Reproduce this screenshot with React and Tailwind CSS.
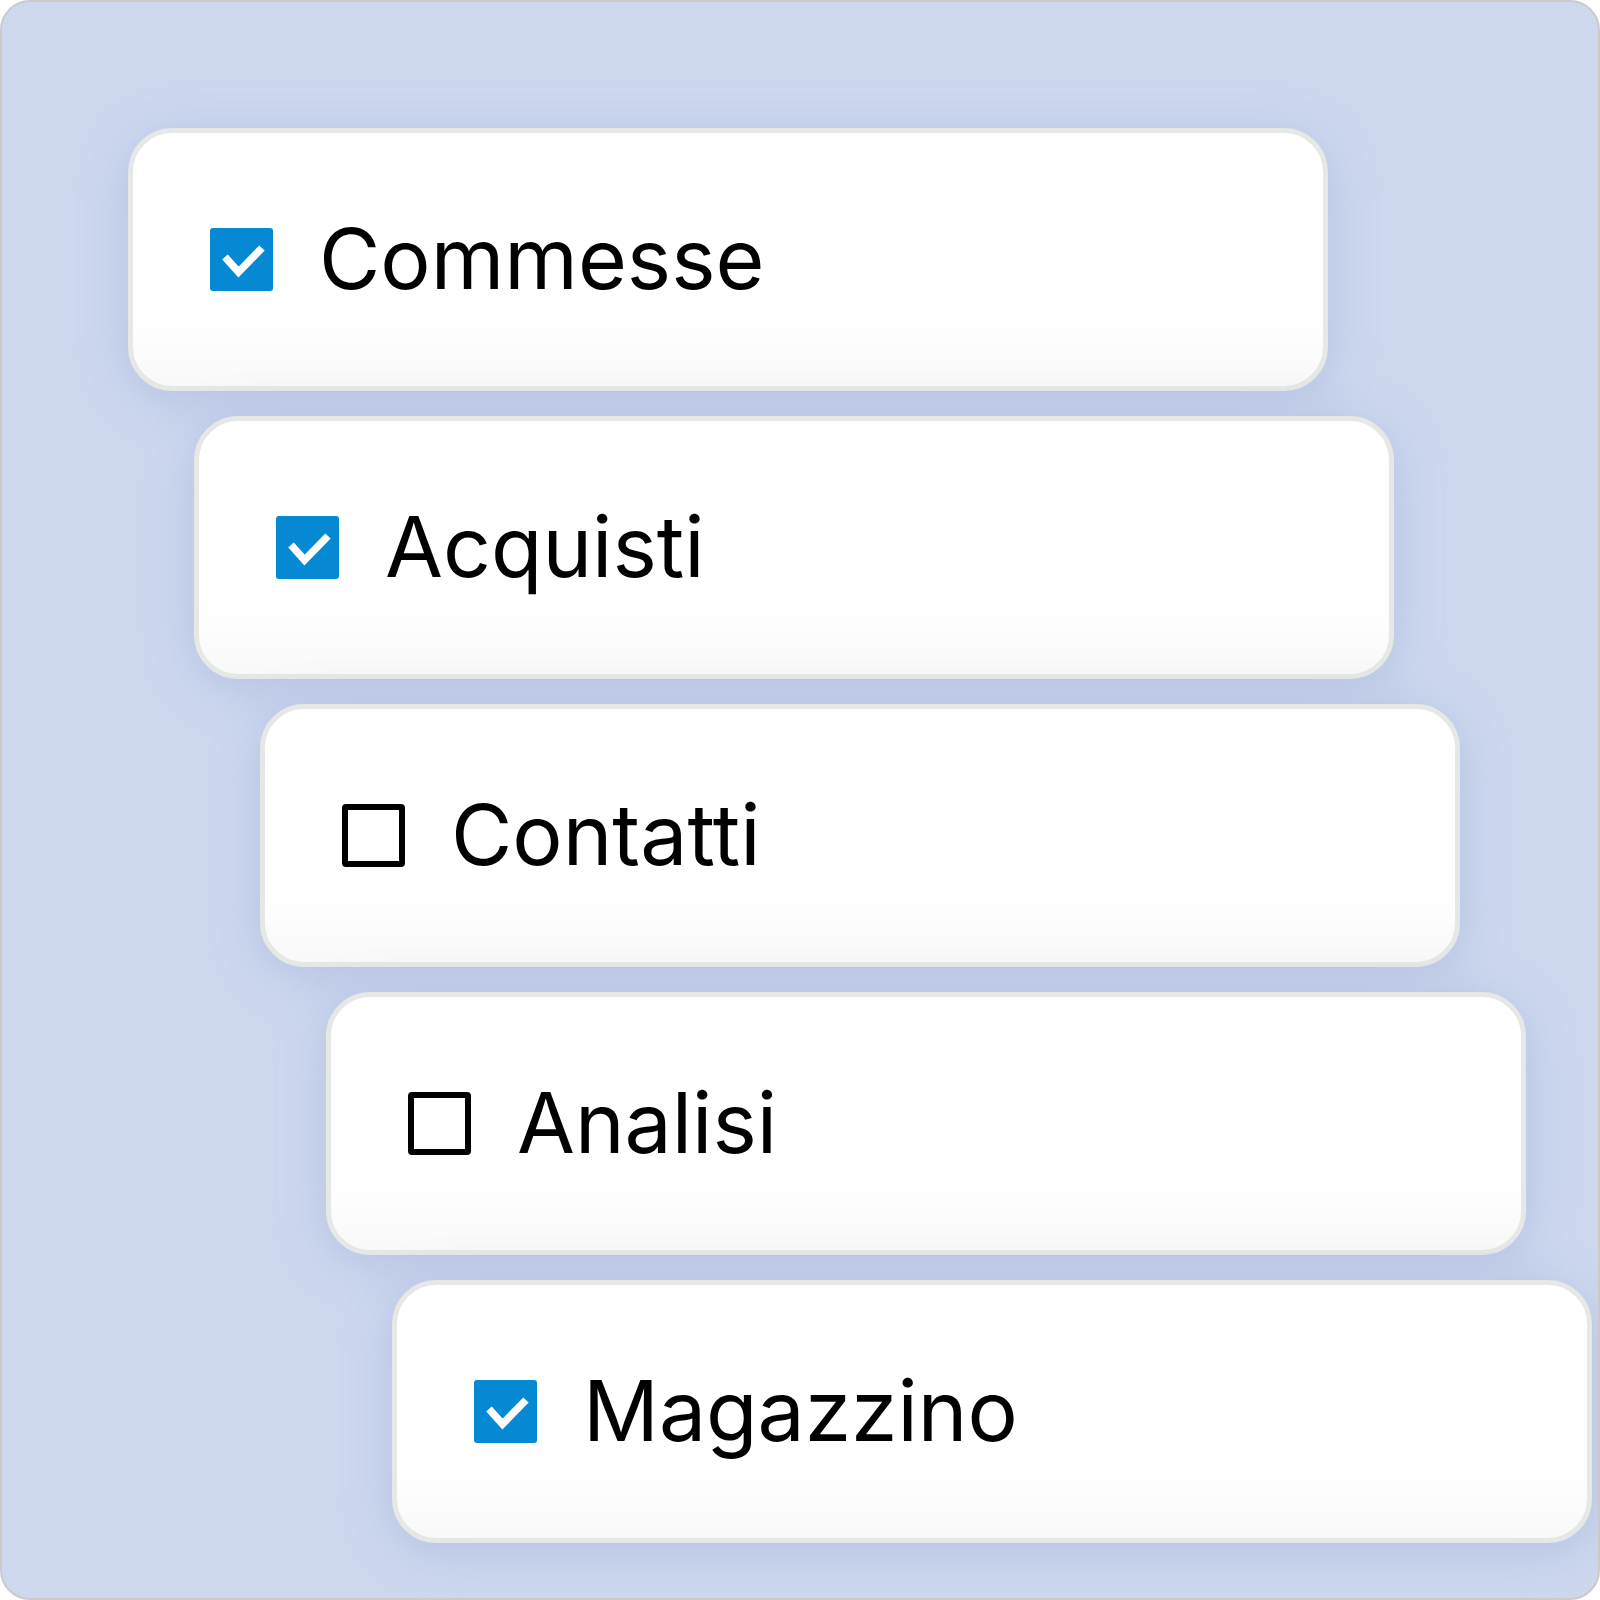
import React from 'react';

const items = [
    { label: 'Commesse', checked: true, indent: 'ml-0' },
    { label: 'Acquisti', checked: true, indent: 'ml-[66px]' },
    { label: 'Contatti', checked: false, indent: 'ml-[132px]' },
    { label: 'Analisi', checked: false, indent: 'ml-[198px]' },
    { label: 'Magazzino', checked: true, indent: 'ml-[264px]' },
];

const Box = ({ checked }) =>
    checked ? (
        <div className="w-[63px] h-[63px] shrink-0 rounded-[3px] bg-[#0689d3] flex items-center justify-center">
            <svg className="w-[63px] h-[63px]" viewBox="0 0 63 63" fill="none">
                <path d="M15 29l13.5 15L52 20" stroke="#fff" strokeWidth="7.5" />
            </svg>
        </div>
    ) : (
        <div className="w-[63px] h-[63px] shrink-0 rounded-[4px] border-[6px] border-black bg-white" />
    );

export default function App() {
    return (
        <div className="w-[1600px] h-[1600px] rounded-[30px] border-2 border-[#cacaca] bg-[#cdd8ef] overflow-hidden pt-[126px] pl-[126px] flex flex-col gap-[25px] font-['Inter',sans-serif]">
            {items.map((it) => (
                <div
                    key={it.label}
                    className={`${it.indent} w-[1200px] h-[263px] shrink-0 rounded-[44px] border-[5px] border-[#e6e8e6] bg-gradient-to-b from-white from-70% to-[#f9f9f9] shadow-[0_8px_50px_rgba(120,135,190,0.28)] flex items-center pl-[77px] gap-[46px]`}
                >
                    <Box checked={it.checked} />
                    <span className="text-[84px] leading-none text-black pb-[2px]">{it.label}</span>
                </div>
            ))}
        </div>
    );
}
